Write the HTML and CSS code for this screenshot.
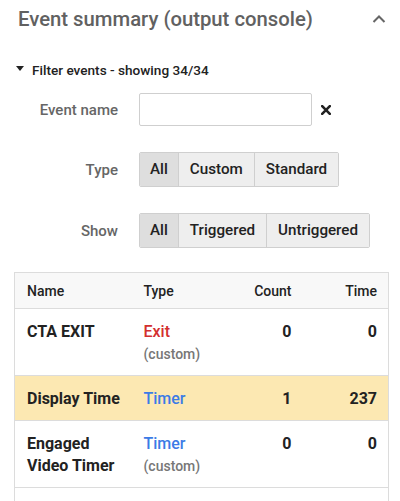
FILE: index.html
```html
<!DOCTYPE html>
<html>
<head>
<meta charset="utf-8">
<link rel="stylesheet" href="styles.css">
</head>
<body>
<div class="panel">
  <div class="title-row">
    <h1 class="title">Event summary (output console)</h1>
    <svg class="chevron" width="14" height="10" viewBox="0 0 14 10"><polyline points="1.5,8 7,2.5 12.5,8" fill="none" stroke="#666" stroke-width="2"/></svg>
  </div>
  <div class="filter-toggle">
    <svg class="tri" width="8" height="6" viewBox="0 0 8 6"><polygon points="0,0 8,0 4,5" fill="#222"/></svg>
    <span>Filter events - showing 34/34</span>
  </div>
  <div class="form">
    <div class="label">Event name</div>
    <div class="control">
      <input class="name-input" type="text">
      <svg class="clear" width="10" height="10" viewBox="0 0 10 10"><path d="M1.2 1.2 L8.8 8.8 M8.8 1.2 L1.2 8.8" stroke="#222" stroke-width="2.6" stroke-linecap="square"/></svg>
    </div>
    <div class="label">Type</div>
    <div class="control">
      <div class="btn-group">
        <span class="btn active">All</span><span class="btn">Custom</span><span class="btn">Standard</span>
      </div>
    </div>
    <div class="label">Show</div>
    <div class="control">
      <div class="btn-group">
        <span class="btn active">All</span><span class="btn">Triggered</span><span class="btn">Untriggered</span>
      </div>
    </div>
  </div>
  <table class="events">
    <colgroup><col class="c-name"><col class="c-type"><col class="c-count"><col class="c-time"></colgroup>
    <thead>
      <tr><th>Name</th><th>Type</th><th class="num">Count</th><th class="num">Time</th></tr>
    </thead>
    <tbody>
      <tr>
        <td class="name">CTA EXIT</td>
        <td><div class="type exit">Exit</div><div class="sub">(custom)</div></td>
        <td class="num">0</td>
        <td class="num">0</td>
      </tr>
      <tr class="hl">
        <td class="name">Display Time</td>
        <td><div class="type timer">Timer</div></td>
        <td class="num">1</td>
        <td class="num">237</td>
      </tr>
      <tr>
        <td class="name">Engaged<br>Video Timer</td>
        <td><div class="type timer">Timer</div><div class="sub">(custom)</div></td>
        <td class="num">0</td>
        <td class="num">0</td>
      </tr>
      <tr class="empty">
        <td>&nbsp;</td><td></td><td></td><td></td>
      </tr>
    </tbody>
  </table>
</div>
</body>
</html>
```

FILE: styles.css
```css
html, body {
  margin: 0;
  padding: 0;
  background: #fff;
}
body {
  font-family: Roboto, "Liberation Sans", sans-serif;
  color: #222;
  overflow: hidden;
}
.panel {
  padding: 5px 12px 0 14px;
}
.title-row {
  display: flex;
  align-items: flex-start;
  justify-content: space-between;
}
.title {
  margin: 0 0 0 4px;
  font-size: 20.3px;
  line-height: 28px;
  font-weight: 500;
  color: #616161;
}
.chevron {
  margin: 9px 2px 0 0;
}
.filter-toggle {
  display: flex;
  align-items: center;
  margin-top: 27px;
  height: 20px;
  font-size: 13.6px;
  font-weight: 500;
  color: #222;
}
.tri {
  margin: 0 8px 3px 2px;
}
.form {
  display: grid;
  grid-template-columns: 104px auto;
  column-gap: 21px;
  row-gap: 26px;
  margin-top: 13px;
  align-items: center;
}
.label {
  text-align: right;
  font-size: 15px;
  font-weight: 500;
  color: #666;
}
.control {
  display: flex;
  align-items: center;
}
.name-input {
  box-sizing: border-box;
  width: 173px;
  height: 33px;
  margin: 0;
  border: 1px solid #cfcfcf;
  border-radius: 2px;
  background: #fff;
  outline: none;
}
.clear {
  margin-left: 9px;
}
.btn-group {
  display: flex;
  border: 1px solid #cfcfcf;
  border-radius: 2px;
  overflow: hidden;
}
.btn {
  height: 33px;
  line-height: 33px;
  padding: 0 11px;
  font-size: 15.2px;
  font-weight: 500;
  color: #222;
  background: #eeeeee;
  border-left: 1px solid #cfcfcf;
}
.btn:first-child {
  border-left: none;
  padding: 0 10px;
}
.btn.active {
  background: #dedede;
}
.events {
  margin-top: 24px;
  width: 374px;
  border-collapse: collapse;
  table-layout: fixed;
  border: 1px solid #dcdcdc;
}
.c-name { width: 117px; }
.c-type { width: 89px; }
.c-count { width: 82px; }
.c-time { width: 86px; }
.events th {
  height: 35px;
  padding: 0 11px 0 12px;
  background: #f8f8f8;
  font-size: 14px;
  font-weight: 500;
  text-align: left;
  color: #222;
  border-bottom: 1px solid #dcdcdc;
}
.events th.num, .events td.num {
  text-align: right;
}
.events td {
  padding: 12px 11px 10px 12px;
  vertical-align: top;
  font-size: 16px;
  line-height: 22px;
  border-bottom: 1px solid #dcdcdc;
}
.events td.name, .events td.num {
  font-weight: 700;
  color: #222;
}
.type {
  font-weight: 500;
}
.exit {
  color: #d32f2f;
}
.timer {
  color: #3b7be6;
}
.sub {
  font-size: 14px;
  font-weight: 500;
  color: #777;
  line-height: 22px;
}
.hl td {
  background: #fce8b2;
}
.empty td {
  height: 22px;
}
```
